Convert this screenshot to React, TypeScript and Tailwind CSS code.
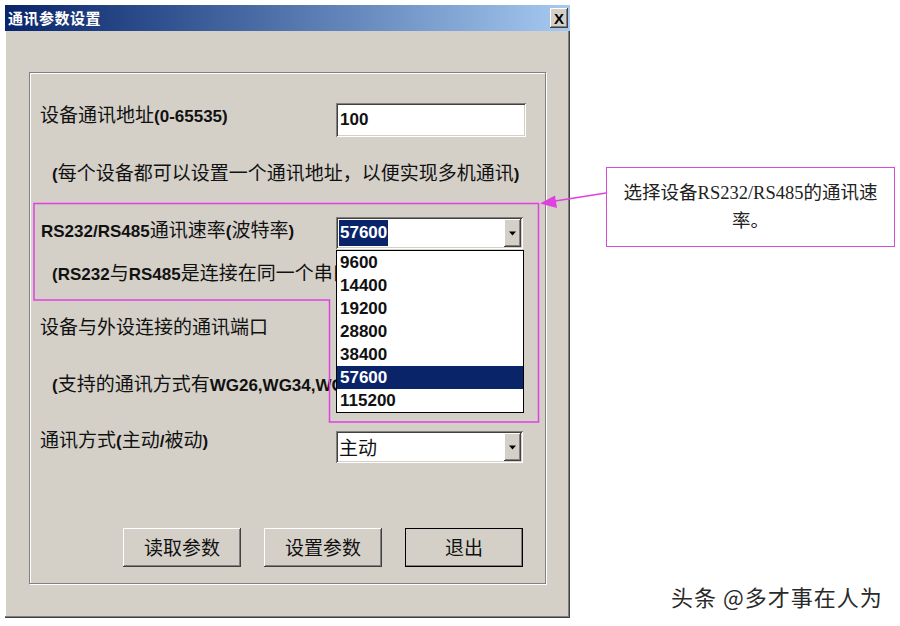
import type { ReactNode } from 'react'

const raised =
  'shadow-[inset_-1px_-1px_0_#404040,inset_1px_1px_0_#ffffff,inset_-2px_-2px_0_#808080,inset_2px_2px_0_#d4d0c8]'
const sunken =
  'shadow-[inset_1px_1px_0_#808080,inset_-1px_-1px_0_#ffffff,inset_2px_2px_0_#404040,inset_-2px_-2px_0_#d4d0c8]'

const rates = ['9600', '14400', '19200', '28800', '38400', '57600', '115200']

// Latin runs in the old dialog are bold and narrow, CJK runs are regular.
function Mixed({ text }: { text: string }) {
  const parts = text.split(/([\x21-\x7e]+)/)
  return (
    <>
      {parts.map((p, i) =>
        /[\x21-\x7e]/.test(p) ? (
          <span key={i} className="font-bold text-[17px]" style={{ fontFamily: '"Liberation Sans", sans-serif' }}>
            {p}
          </span>
        ) : (
          p
        )
      )}
    </>
  )
}

function Arrow() {
  return (
    <svg width="9" height="5" viewBox="0 0 9 5">
      <path d="M1 0.5h7l-3.5 4z" fill="#000" />
    </svg>
  )
}

function Combo({ children, list }: { children: ReactNode; list?: boolean }) {
  return (
    <div className={`relative flex h-[32px] w-[187px] bg-white p-[2px] ${sunken}`}>
      <div className="flex flex-1 items-center pl-[1px]">{children}</div>
      <div className={`flex w-[17px] items-center justify-center bg-[#d4d0c8] ${raised}`}>
        <Arrow />
      </div>
      {list && (
        <div className="absolute left-0 top-[33px] z-10 w-[188px] border border-black bg-white">
          {rates.map((r) => (
            <div
              key={r}
              className={`h-[23px] pl-[3px] text-[17px] font-bold leading-[23px] ${
                r === '57600' ? 'bg-[#0a246a] text-white' : 'text-[#111]'
              }`}
              style={{ fontFamily: '"Liberation Sans", sans-serif' }}
            >
              {r}
            </div>
          ))}
        </div>
      )}
    </div>
  )
}

function Button({ label, primary }: { label: string; primary?: boolean }) {
  return (
    <div
      className={`flex h-[39px] w-[118px] items-center justify-center bg-[#d4d0c8] text-[19px] text-[#111] ${raised} ${
        primary ? 'outline outline-1 outline-black -outline-offset-1' : ''
      }`}
    >
      {label}
    </div>
  )
}

function Dialog() {
  return (
    <div
      className="flex h-[613px] w-[565px] flex-col bg-[#d4d0c8] shadow-[inset_-1px_-1px_0_#404040,inset_-2px_-2px_0_#808080,inset_1px_0_0_#ffffff]"
      style={{ fontFamily: '"Noto Sans CJK SC", "Liberation Sans", sans-serif' }}
    >
      <div className="flex h-[26px] items-center justify-between bg-linear-to-r from-[#0a246a] to-[#a6caf0] pl-[3px] pr-[2px]">
        <span className="text-[15px] font-bold tracking-[0.5px] text-white">通讯参数设置</span>
        <div
          className={`flex h-[20px] w-[18px] items-center justify-center bg-[#d4d0c8] text-[15px] font-bold leading-none text-black ${raised}`}
          style={{ fontFamily: '"Liberation Sans", sans-serif' }}
        >
          X
        </div>
      </div>

      <div className="mx-[24px] mt-[41px] flex h-[512px] flex-col border border-[#808080] pl-[10px] pt-[30px] text-[19px] text-[#111] shadow-[inset_1px_1px_0_#ffffff,1px_1px_0_#ffffff]">
        <div className="flex h-[34px] items-center">
          <div className="w-[296px] pb-[10px]">
            <Mixed text="设备通讯地址(0-65535)" />
          </div>
          <div className={`flex h-[34px] w-[190px] items-center bg-white pl-[4px] ${sunken}`}>
            <Mixed text="100" />
          </div>
        </div>

        <div className="mt-[23px] h-[24px] pl-[12px] leading-[24px]">
          <Mixed text="(每个设备都可以设置一个通讯地址，以便实现多机通讯)" />
        </div>

        <div className="mt-[33px] flex h-[32px] items-center">
          <div className="w-[296px] pb-[6px] pl-[1px]">
            <Mixed text="RS232/RS485通讯速率(波特率)" />
          </div>
          <Combo list>
            <span
              className="bg-[#0a246a] px-[1px] text-[17px] font-bold leading-[26px] text-white"
              style={{ fontFamily: '"Liberation Sans", sans-serif' }}
            >
              57600
            </span>
          </Combo>
        </div>

        {/* the open list covers the end of this line */}
        <div className="mt-[11px] h-[24px] w-[296px] overflow-hidden whitespace-nowrap pl-[12px] leading-[24px]">
          <Mixed text="(RS232与RS485是连接在同一个串口" />
        </div>

        <div className="mt-[30px] h-[24px] leading-[24px]">
          <Mixed text="设备与外设连接的通讯端口" />
        </div>

        <div className="mt-[33px] h-[24px] w-[296px] overflow-hidden whitespace-nowrap pl-[12px] leading-[24px]">
          <Mixed text="(支持的通讯方式有WG26,WG34,WG" />
        </div>

        <div className="mt-[36px] flex h-[32px] items-center">
          <div className="w-[296px] pb-[14px]">
            <Mixed text="通讯方式(主动/被动)" />
          </div>
          <Combo>
            <span className="leading-[26px]">主动</span>
          </Combo>
        </div>

        <div className="mt-[65px] flex justify-end gap-[23px] pr-[22px]">
          <Button label="读取参数" />
          <Button label="设置参数" />
          <Button label="退出" primary />
        </div>
      </div>
    </div>
  )
}

export default function App() {
  return (
    <div className="relative h-[626px] w-[900px] overflow-hidden bg-white pl-[5px] pt-[5px]">
      <Dialog />

      {/* magenta annotation drawn over the screenshot */}
      <svg className="pointer-events-none absolute left-0 top-0 z-20" width="900" height="626">
        <path d="M34 203.5H538.5V422H329.5V300H34Z" fill="none" stroke="#e040e0" strokeWidth="1.5" />
        <line x1="606" y1="193" x2="552" y2="201.5" stroke="#e040e0" strokeWidth="1.5" />
        <polygon points="540,203.5 555,195.5 557,208" fill="#e040e0" />
      </svg>

      <div
        className="absolute left-[606px] top-[167px] z-20 flex h-[80px] w-[289px] items-center justify-center border border-[#d64cd6] bg-white text-center text-[18.5px] leading-[28px] text-[#222]"
        style={{ fontFamily: '"Liberation Serif", "Noto Sans CJK SC", serif' }}
      >
        <p>
          选择设备RS232/RS485的通讯速
          <br />
          率。
        </p>
      </div>

      <div
        className="absolute left-[671px] top-[581px] text-[22px] leading-[30px] tracking-[1px] text-[#2a2a2a] [text-shadow:0_0_2px_#ffffff]"
        style={{ fontFamily: '"Noto Sans CJK SC", sans-serif' }}
      >
        头条 @多才事在人为
      </div>
    </div>
  )
}
